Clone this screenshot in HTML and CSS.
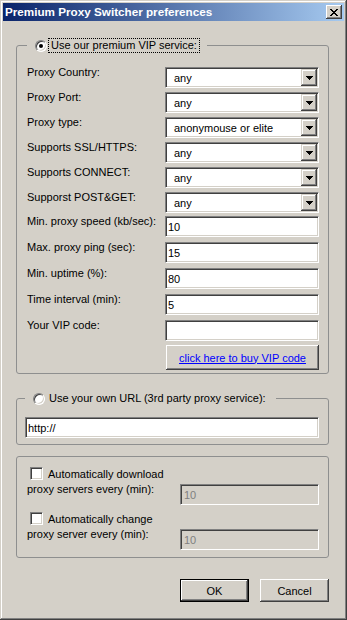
FILE: index.html
```html
<!DOCTYPE html>
<html lang="en">
<head>
  <meta charset="UTF-8" />
  <meta name="viewport" content="width=device-width, initial-scale=1.0" />
  <title>Premium Proxy Switcher preferences</title>
  <link rel="stylesheet" href="styles.css">
</head>
<body>
  <div class="window">
    <div class="titlebar">
      <span class="title">Premium Proxy Switcher preferences</span>
      <button class="close-btn" type="button" aria-label="Close">
        <svg width="8" height="7" viewBox="0 0 8 7"><path d="M0 0h2v1H0zM6 0h2v1H6zM1 1h2v1H1zM5 1h2v1H5zM2 2h4v1H2zM3 3h2v1H3zM2 4h4v1H2zM1 5h2v1H1zM5 5h2v1H5zM0 6h2v1H0zM6 6h2v1H6z" fill="#000"/></svg>
      </button>
    </div>

    <fieldset class="group group-vip">
      <legend>
        <span class="legend-inner"><span class="radio checked"></span><span class="legend-text focus">Use our premium VIP service:</span></span>
      </legend>

      <div class="row">
        <span class="label">Proxy Country:</span>
        <div class="combo"><span class="combo-value">any</span><span class="combo-btn"><svg width="7" height="4" viewBox="0 0 7 4"><path d="M0 0h7v1H0zM1 1h5v1H1zM2 2h3v1H2zM3 3h1v1H3z" fill="#000"/></svg></span></div>
      </div>
      <div class="row">
        <span class="label">Proxy Port:</span>
        <div class="combo"><span class="combo-value">any</span><span class="combo-btn"><svg width="7" height="4" viewBox="0 0 7 4"><path d="M0 0h7v1H0zM1 1h5v1H1zM2 2h3v1H2zM3 3h1v1H3z" fill="#000"/></svg></span></div>
      </div>
      <div class="row">
        <span class="label">Proxy type:</span>
        <div class="combo"><span class="combo-value">anonymouse or elite</span><span class="combo-btn"><svg width="7" height="4" viewBox="0 0 7 4"><path d="M0 0h7v1H0zM1 1h5v1H1zM2 2h3v1H2zM3 3h1v1H3z" fill="#000"/></svg></span></div>
      </div>
      <div class="row">
        <span class="label">Supports SSL/HTTPS:</span>
        <div class="combo"><span class="combo-value">any</span><span class="combo-btn"><svg width="7" height="4" viewBox="0 0 7 4"><path d="M0 0h7v1H0zM1 1h5v1H1zM2 2h3v1H2zM3 3h1v1H3z" fill="#000"/></svg></span></div>
      </div>
      <div class="row">
        <span class="label">Supports CONNECT:</span>
        <div class="combo"><span class="combo-value">any</span><span class="combo-btn"><svg width="7" height="4" viewBox="0 0 7 4"><path d="M0 0h7v1H0zM1 1h5v1H1zM2 2h3v1H2zM3 3h1v1H3z" fill="#000"/></svg></span></div>
      </div>
      <div class="row">
        <span class="label">Supporst POST&amp;GET:</span>
        <div class="combo"><span class="combo-value">any</span><span class="combo-btn"><svg width="7" height="4" viewBox="0 0 7 4"><path d="M0 0h7v1H0zM1 1h5v1H1zM2 2h3v1H2zM3 3h1v1H3z" fill="#000"/></svg></span></div>
      </div>

      <div class="row text-row first-text">
        <span class="label">Min. proxy speed (kb/sec):</span>
        <input class="field" type="text" value="10" />
      </div>
      <div class="row text-row">
        <span class="label">Max. proxy ping (sec):</span>
        <input class="field" type="text" value="15" />
      </div>
      <div class="row text-row">
        <span class="label">Min. uptime (%):</span>
        <input class="field" type="text" value="80" />
      </div>
      <div class="row text-row">
        <span class="label">Time interval (min):</span>
        <input class="field" type="text" value="5" />
      </div>
      <div class="row text-row">
        <span class="label">Your VIP code:</span>
        <input class="field" type="text" value="" />
      </div>
      <div class="row buy-row">
        <a class="buy-btn" href="#">click here to buy VIP code</a>
      </div>
    </fieldset>

    <fieldset class="group group-url">
      <legend>
        <span class="legend-inner"><span class="radio"></span><span class="legend-text">Use your own URL (3rd party proxy service):</span></span>
      </legend>
      <input class="field url-field" type="text" value="http://" />
    </fieldset>

    <fieldset class="group group-auto">
      <div class="check-row">
        <span class="checkbox"></span>
        <span>Automatically download</span>
      </div>
      <div class="row auto-row">
        <span class="label">proxy servers every (min):</span>
        <input class="field small-field" type="text" value="10" disabled />
      </div>
      <div class="check-row second">
        <span class="checkbox"></span>
        <span>Automatically change</span>
      </div>
      <div class="row auto-row">
        <span class="label">proxy server every (min):</span>
        <input class="field small-field" type="text" value="10" disabled />
      </div>
    </fieldset>

    <div class="actions">
      <button class="btn btn-default" type="button">OK</button>
      <button class="btn" type="button">Cancel</button>
    </div>
  </div>
</body>
</html>
```

FILE: styles.css
```css
* {
  box-sizing: border-box;
}
body {
  margin: 0;
  font-family: "Liberation Sans", Arial, sans-serif;
  font-size: 11px;
  color: #000;
  background: #d4d0c8;
}
.window {
  width: 347px;
  height: 620px;
  padding: 3px;
  background: #d4d0c8;
  box-shadow: inset -1px -1px #404040, inset 1px 1px #d4d0c8,
              inset -2px -2px #808080, inset 2px 2px #fff;
}
.titlebar {
  height: 18px;
  display: flex;
  justify-content: space-between;
  align-items: flex-start;
  padding: 0 2px;
  background: linear-gradient(to right, #0a246a, #a6caf0);
  color: #fff;
}
.title {
  font-weight: bold;
  font-size: 11.7px;
  line-height: 18px;
}
.close-btn {
  width: 16px;
  height: 14px;
  margin-top: 2px;
  padding: 0;
  border: 0;
  background: #d4d0c8;
  display: flex;
  align-items: center;
  justify-content: center;
  box-shadow: inset -1px -1px #404040, inset 1px 1px #fff,
              inset -2px -2px #808080, inset 2px 2px #d4d0c8;
}
.close-btn svg {
  display: block;
}

/* group boxes */
.group {
  margin: 17px 15px 0 13px;
  padding: 14px 9px 3px 10px;
  border: 1px solid #8e8f8f;
  border-radius: 3px;
  min-width: 0;
}
.group legend {
  padding: 0 7px 0 8px;
}
.legend-inner {
  display: flex;
  align-items: center;
  height: 15px;
}
.legend-text {
  margin-left: 1px;
  padding: 0 2px;
  line-height: 13px;
  border: 1px solid transparent;
}
.legend-text.focus {
  border: 1px dotted #000;
}
.radio {
  width: 12px;
  height: 12px;
  border-radius: 50%;
  background: #fff;
  border: 1px solid;
  border-color: #808080 #fff #fff #808080;
  box-shadow: inset 1px 1px #404040, inset -1px -1px #d4d0c8;
  display: flex;
  align-items: center;
  justify-content: center;
}
.radio.checked::after {
  content: "";
  width: 4px;
  height: 4px;
  border-radius: 50%;
  background: #000;
}

.row {
  display: flex;
  align-items: flex-start;
  margin-top: 4px;
}
.row:first-of-type {
  margin-top: 0;
}
.row.text-row {
  margin-top: 5px;
}
.row.first-text {
  margin-top: 3px;
}
.row.buy-row {
  margin-top: 4px;
  justify-content: flex-end;
}
.label {
  flex: 1;
  line-height: 13px;
  margin-top: -1px;
  white-space: nowrap;
}

.combo {
  width: 154px;
  height: 21px;
  display: flex;
  align-items: center;
  background: #fff;
  border: 1px solid;
  border-color: #808080 #fff #fff #808080;
  box-shadow: inset 1px 1px #404040, inset -1px -1px #d4d0c8;
  padding: 1px 1px 1px 8px;
}
.combo-value {
  flex: 1;
}
.combo-btn {
  width: 16px;
  height: 17px;
  display: flex;
  align-items: center;
  justify-content: center;
  background: #d4d0c8;
  box-shadow: inset -1px -1px #404040, inset 1px 1px #d4d0c8,
              inset -2px -2px #808080, inset 2px 2px #fff;
}
.combo-btn svg {
  display: block;
}

.field {
  width: 154px;
  height: 21px;
  margin: 0;
  padding: 0 2px;
  font-family: inherit;
  font-size: 11px;
  color: #000;
  background: #fff;
  border: 1px solid;
  border-color: #808080 #fff #fff #808080;
  box-shadow: inset 1px 1px #404040, inset -1px -1px #d4d0c8;
  border-radius: 0;
  outline: none;
}
.field:disabled {
  background: #d4d0c8;
  color: #808080;
}

.buy-btn {
  width: 153px;
  height: 25px;
  display: flex;
  align-items: center;
  justify-content: center;
  color: #0000ff;
  text-decoration: underline;
  background: #d4d0c8;
  box-shadow: inset -1px -1px #404040, inset 1px 1px #fff,
              inset -2px -2px #808080, inset 2px 2px #d4d0c8;
}

.group-url {
  padding: 11px 9px 6px 8px;
}
.url-field {
  width: 100%;
  display: block;
}

.group-auto {
  margin-top: 11px;
  padding: 10px 9px 7px 10px;
}
.check-row {
  display: flex;
  align-items: center;
  gap: 5px;
  height: 13px;
  padding-left: 3px;
}
.check-row.second {
  margin-top: 7px;
}
.checkbox {
  width: 13px;
  height: 13px;
  background: #fff;
  border: 1px solid;
  border-color: #808080 #fff #fff #808080;
  box-shadow: inset 1px 1px #404040, inset -1px -1px #d4d0c8;
}
.row.auto-row {
  margin-top: 4px;
}
.row.auto-row + .check-row {
  margin-top: 7px;
}
.small-field {
  width: 139px;
  padding-left: 3px;
}

.actions {
  display: flex;
  justify-content: flex-end;
  gap: 11px;
  margin-top: 21px;
  padding-right: 15px;
}
.btn {
  width: 69px;
  height: 23px;
  padding: 0;
  font-family: inherit;
  font-size: 11px;
  color: #000;
  background: #d4d0c8;
  border: 0;
  box-shadow: inset -1px -1px #404040, inset 1px 1px #fff,
              inset -2px -2px #808080, inset 2px 2px #d4d0c8;
}
.btn-default {
  border: 1px solid #000;
}
```
